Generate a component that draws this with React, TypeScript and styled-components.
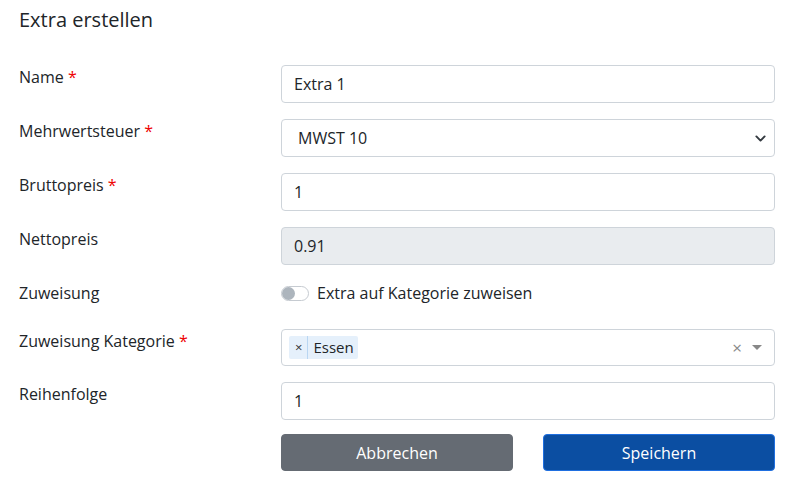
import * as React from 'react'
import styled, { createGlobalStyle } from 'styled-components'

const GlobalStyle = createGlobalStyle`
  body {
    margin: 0;
    background: #fff;
    font-family: 'Open Sans', 'Liberation Sans', sans-serif;
    color: #212529;
    font-size: 16px;
    line-height: 1.5;
  }
  * { box-sizing: border-box; }
`

const Page = styled.div`
  padding: 6px 21px 0 19px;
`

const Heading = styled.h1`
  margin: 0 0 31px;
  font-size: 20px;
  font-weight: 400;
  line-height: 28px;
`

const Form = styled.form`
  display: grid;
  grid-template-columns: 262px 1fr;
  row-gap: 16px;
`

const Label = styled.label`
  line-height: 24px;
`

const Star = styled.span`
  color: #e00;
`

const Input = styled.input<{ $disabled?: boolean }>`
  display: block;
  width: 100%;
  height: 38px;
  padding: 6px 12px;
  font: inherit;
  color: #212529;
  border: 1px solid #ced4da;
  border-radius: 4px;
  background: ${p => (p.$disabled ? '#e9ecef' : '#fff')};
  outline: none;
`

const SelectBox = styled.div`
  display: flex;
  align-items: center;
  height: 38px;
  padding: 0 8px 0 16px;
  border: 1px solid #ced4da;
  border-radius: 4px;
  background: #fff;
`

const SelectValue = styled.span`
  flex: 1;
`

const SwitchRow = styled.div`
  display: flex;
  align-items: center;
  gap: 8px;
  height: 24px;
  margin-bottom: 8px;
`

const Switch = styled.span`
  position: relative;
  width: 28px;
  height: 15px;
  border: 1px solid #c6cbd1;
  border-radius: 8px;
  background: #fff;
  &::after {
    content: '';
    position: absolute;
    left: 0;
    top: 0;
    width: 13px;
    height: 13px;
    border-radius: 50%;
    background: #adb5bd;
  }
`

const MultiBox = styled.div`
  display: flex;
  align-items: center;
  height: 37px;
  padding: 0 12px 0 7px;
  border: 1px solid #ced4da;
  border-radius: 4px;
  background: #fff;
`

const Tag = styled.span`
  display: flex;
  align-items: center;
  height: 23px;
  background: #e5f0fb;
  border-radius: 2px;
  font-size: 15px;
`

const TagRemove = styled.span`
  padding: 0 5px 0 6px;
  font-size: 13px;
  color: #333;
  border-right: 1px solid #b9d6f2;
  line-height: 23px;
`

const TagText = styled.span`
  padding: 0 4px 0 5px;
`

const Spacer = styled.span`
  flex: 1;
`

const Clear = styled.span`
  color: #888;
  font-size: 17px;
  margin-right: 10px;
`

const Caret = styled.span`
  width: 0;
  height: 0;
  border-left: 5px solid transparent;
  border-right: 5px solid transparent;
  border-top: 5px solid #888;
`

const Buttons = styled.div`
  display: grid;
  grid-template-columns: 1fr 1fr;
  column-gap: 30px;
  margin-top: -2px;
`

const Button = styled.button<{ $primary?: boolean }>`
  height: 37px;
  font: inherit;
  color: #fff;
  border-radius: 4px;
  border: 1px solid ${p => (p.$primary ? '#1f6fe0' : '#656b73')};
  background: ${p => (p.$primary ? '#0b4ea2' : '#656b73')};
`

const Chevron = () => (
  <svg width="11" height="11" viewBox="0 0 16 16">
    <path d="M2 5l6 6 6-6" fill="none" stroke="#343a40" strokeWidth="2.8" strokeLinecap="round" strokeLinejoin="round" />
  </svg>
)

const App = () => (
  <Page>
    <GlobalStyle />
    <Heading>Extra erstellen</Heading>
    <Form>
      <Label>Name <Star>*</Star></Label>
      <Input defaultValue="Extra 1" />

      <Label>Mehrwertsteuer <Star>*</Star></Label>
      <SelectBox>
        <SelectValue>MWST 10</SelectValue>
        <Chevron />
      </SelectBox>

      <Label>Bruttopreis <Star>*</Star></Label>
      <Input defaultValue="1" />

      <Label>Nettopreis</Label>
      <Input defaultValue="0.91" $disabled readOnly />

      <Label>Zuweisung</Label>
      <SwitchRow>
        <Switch />
        <span>Extra auf Kategorie zuweisen</span>
      </SwitchRow>

      <Label>Zuweisung Kategorie <Star>*</Star></Label>
      <MultiBox>
        <Tag>
          <TagRemove>×</TagRemove>
          <TagText>Essen</TagText>
        </Tag>
        <Spacer />
        <Clear>×</Clear>
        <Caret />
      </MultiBox>

      <Label>Reihenfolge</Label>
      <Input defaultValue="1" />

      <span />
      <Buttons>
        <Button type="button">Abbrechen</Button>
        <Button type="button" $primary>Speichern</Button>
      </Buttons>
    </Form>
  </Page>
)

export default App
